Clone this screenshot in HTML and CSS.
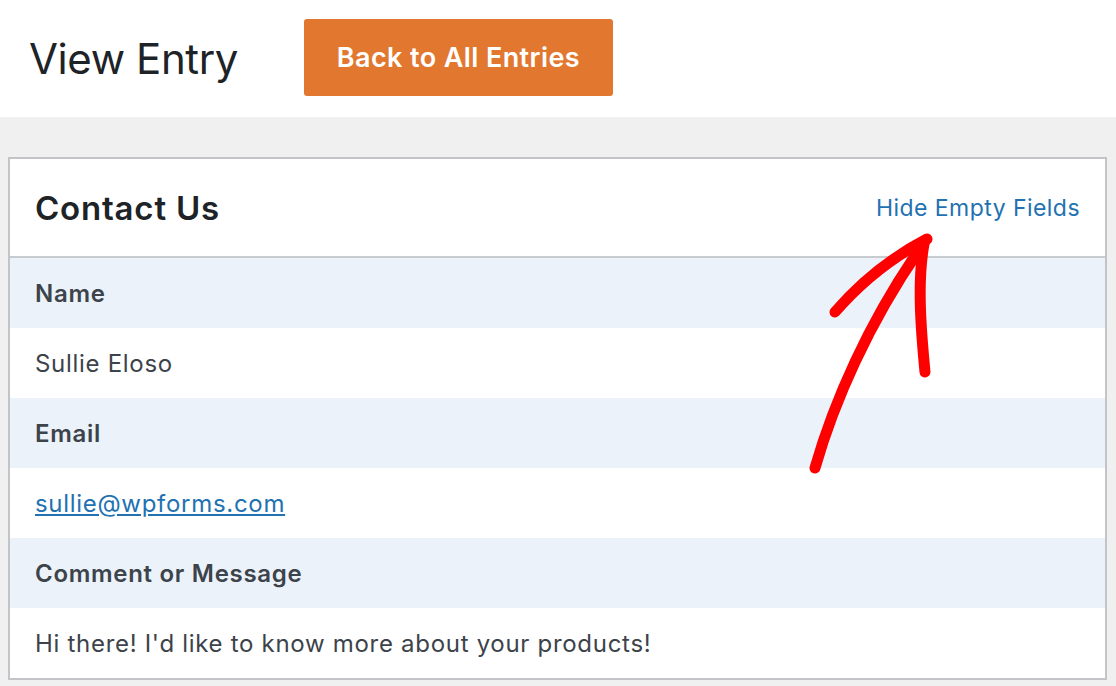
FILE: index.html
```html
<!DOCTYPE html>
<html>
<head>
    <title>View Entry</title>
    <link rel="stylesheet" href="styles.css">
</head>
<body>

    <div class="top-bar">
        <h1>View Entry</h1>
        <a href="#" class="back-btn">Back to All Entries</a>
    </div>

    <div class="content">
        <div class="entry-card">
            <div class="card-head">
                <h2>Contact Us</h2>
                <a href="#" class="toggle-empty">Hide Empty Fields</a>
            </div>

            <div class="field-label">Name</div>
            <div class="field-value">Sullie Eloso</div>

            <div class="field-label">Email</div>
            <div class="field-value"><a href="#">sullie@wpforms.com</a></div>

            <div class="field-label">Comment or Message</div>
            <div class="field-value">Hi there! I'd like to know more about your products!</div>
        </div>
    </div>

    <!-- hand drawn arrow pointing at the link -->
    <svg class="arrow" width="1116" height="686" viewBox="0 0 1116 686">
        <path d="M815 468 C 833 405, 868 322, 924 243" />
        <path d="M835 312 Q 875 266 927 239" />
        <path d="M924 244 C 917 282, 921 330, 925 372" />
    </svg>

</body>
</html>
```

FILE: styles.css
```css
body {
    margin: 0;
    background-color: #f0f0f1;
    font-family: Inter, "Noto Sans", sans-serif;
    color: #3c434a;
    position: relative;
    height: 686px;
    overflow: hidden;
}

.top-bar {
    display: flex;
    align-items: center;
    gap: 66px;
    height: 117px;
    padding-left: 29px;
    background-color: #fff;
}

.top-bar h1 {
    margin: 0;
    font-size: 42px;
    font-weight: 400;
    color: #1d2327;
    letter-spacing: -0.4px;
}

.back-btn {
    display: flex;
    align-items: center;
    justify-content: center;
    width: 309px;
    height: 77px;
    background-color: #e27730;
    color: #fff;
    border-radius: 3px;
    font-size: 27px;
    font-weight: 600;
    letter-spacing: 0.4px;
    text-decoration: none;
    margin-top: -2px;
}

.content {
    padding: 40px 9px 0 8px;
}

.entry-card {
    background-color: #fff;
    border: 2px solid #c3c4c7;
}

.card-head {
    display: flex;
    align-items: center;
    justify-content: space-between;
    height: 97px;
    padding: 0 25px;
    border-bottom: 2px solid #c8ccd0;
}

.card-head h2 {
    margin: 0;
    font-size: 33px;
    font-weight: 600;
    color: #1d2327;
    letter-spacing: 0.8px;
}

.toggle-empty {
    color: #2271b1;
    text-decoration: none;
    font-size: 23px;
    letter-spacing: 0.45px;
}

.field-label, .field-value {
    display: flex;
    align-items: center;
    height: 70px;
    padding-left: 25px;
    font-size: 24px;
    letter-spacing: 0.7px;
}

.field-label {
    background-color: #ebf2fa;
    font-weight: 600;
}

.field-value a {
    color: #2271b1;
}

.arrow {
    position: absolute;
    top: 0;
    left: 0;
    pointer-events: none;
}

.arrow path {
    fill: none;
    stroke: #ff0000;
    stroke-width: 11;
    stroke-linecap: round;
    stroke-linejoin: round;
}
```
